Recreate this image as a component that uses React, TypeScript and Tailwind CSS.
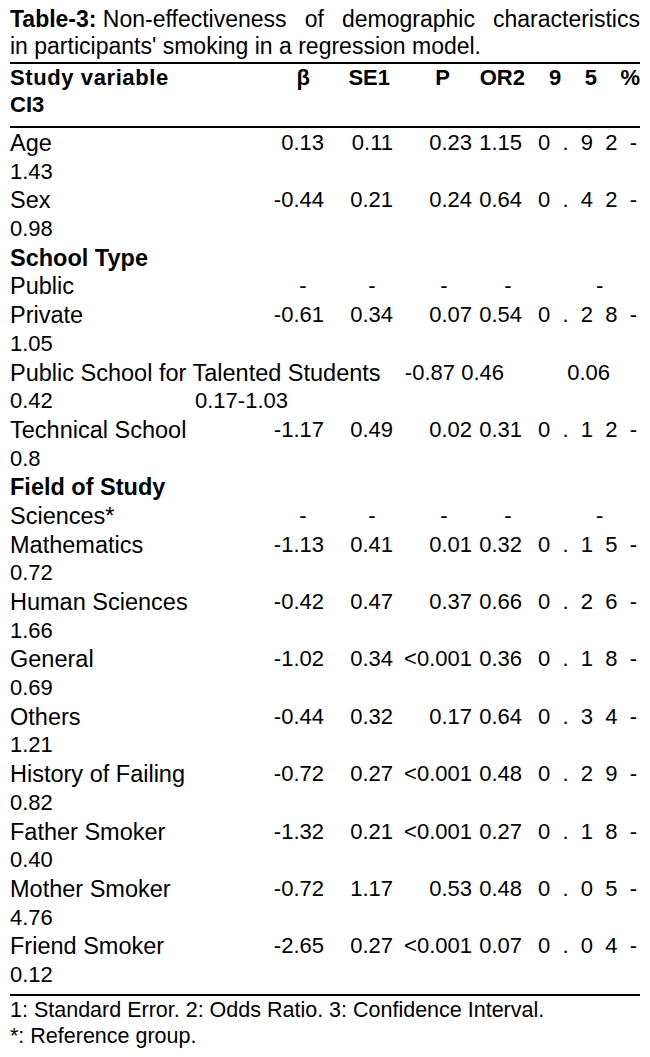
import React from "react";

type Line =
  | { kind: "data"; label: string; vals: string[]; ci: string[]; cont: string }
  | { kind: "group"; label: string }
  | { kind: "ref"; label: string }
  | { kind: "talented" };

const rows: Line[] = [
  { kind: "data", label: "Age", vals: ["0.13", "0.11", "0.23", "1.15"], ci: ["0", ".", "9", "2", "-"], cont: "1.43" },
  { kind: "data", label: "Sex", vals: ["-0.44", "0.21", "0.24", "0.64"], ci: ["0", ".", "4", "2", "-"], cont: "0.98" },
  { kind: "group", label: "School Type" },
  { kind: "ref", label: "Public" },
  { kind: "data", label: "Private", vals: ["-0.61", "0.34", "0.07", "0.54"], ci: ["0", ".", "2", "8", "-"], cont: "1.05" },
  { kind: "talented" },
  { kind: "data", label: "Technical School", vals: ["-1.17", "0.49", "0.02", "0.31"], ci: ["0", ".", "1", "2", "-"], cont: "0.8" },
  { kind: "group", label: "Field of Study" },
  { kind: "ref", label: "Sciences*" },
  { kind: "data", label: "Mathematics", vals: ["-1.13", "0.41", "0.01", "0.32"], ci: ["0", ".", "1", "5", "-"], cont: "0.72" },
  { kind: "data", label: "Human Sciences", vals: ["-0.42", "0.47", "0.37", "0.66"], ci: ["0", ".", "2", "6", "-"], cont: "1.66" },
  { kind: "data", label: "General", vals: ["-1.02", "0.34", "<0.001", "0.36"], ci: ["0", ".", "1", "8", "-"], cont: "0.69" },
  { kind: "data", label: "Others", vals: ["-0.44", "0.32", "0.17", "0.64"], ci: ["0", ".", "3", "4", "-"], cont: "1.21" },
  { kind: "data", label: "History of Failing", vals: ["-0.72", "0.27", "<0.001", "0.48"], ci: ["0", ".", "2", "9", "-"], cont: "0.82" },
  { kind: "data", label: "Father Smoker", vals: ["-1.32", "0.21", "<0.001", "0.27"], ci: ["0", ".", "1", "8", "-"], cont: "0.40" },
  { kind: "data", label: "Mother Smoker", vals: ["-0.72", "1.17", "0.53", "0.48"], ci: ["0", ".", "0", "5", "-"], cont: "4.76" },
  { kind: "data", label: "Friend Smoker", vals: ["-2.65", "0.27", "<0.001", "0.07"], ci: ["0", ".", "0", "4", "-"], cont: "0.12" },
];

function DataLine({ row }: { row: Extract<Line, { kind: "data" }> }) {
  return (
    <>
      <div className="grid h-[28.7px] grid-cols-[258px_56px_69px_79px_50px_1fr]">
        <span>{row.label}</span>
        {row.vals.map((v, i) => (
          <span key={i} className="whitespace-nowrap text-right text-[22px]">
            {v}
          </span>
        ))}
        <span className="flex justify-between pl-[16px] pr-[3px] text-[22px]">
          {row.ci.map((c, i) => (
            <span key={i}>{c}</span>
          ))}
        </span>
      </div>
      <div className="h-[28.7px] text-[22px]">{row.cont}</div>
    </>
  );
}

function RefLine({ label }: { label: string }) {
  return (
    <div className="grid h-[28.7px] grid-cols-[258px_70px_68px_76px_52px_1fr]">
      <span>{label}</span>
      <span className="text-center text-[22px]">-</span>
      <span className="text-center text-[22px]">-</span>
      <span className="text-center text-[22px]">-</span>
      <span className="text-center text-[22px]">-</span>
      <span className="pl-[62px] text-[22px]">-</span>
    </div>
  );
}

export default function App() {
  return (
    <div className="min-h-[1057px] w-[650px] bg-white px-[10px] pt-[6px] font-['Liberation_Sans',Arial,sans-serif] text-black">
      <div className="text-[23px] leading-[27px]">
        <div className="flex justify-between">
          <span>
            <b>Table-3:</b> Non-effectiveness
          </span>
          <span>of</span>
          <span>demographic</span>
          <span>characteristics</span>
        </div>
        <div>in participants' smoking in a regression model.</div>
      </div>

      <div className="mt-[2px] border-t-2 border-black" />
      <div className="text-[22px] font-bold leading-[27px]">
        <div className="grid grid-cols-[258px_42px_80px_60px_75px_1fr]">
          <span className="tracking-[0.6px]">Study variable</span>
          <span className="text-right">β</span>
          <span className="text-right">SE1</span>
          <span className="text-right">P</span>
          <span className="text-right">OR2</span>
          <span className="flex justify-between pl-[24px]">
            <span>9</span>
            <span>5</span>
            <span>%</span>
          </span>
        </div>
        <div>CI3</div>
      </div>
      <div className="mt-[8px] border-t-2 border-black" />

      <div className="pt-[1px] text-[23.5px] leading-[28.7px]">
        {rows.map((row, i) => {
          if (row.kind === "group") {
            return (
              <div key={i} className="h-[28.7px] font-bold">
                {row.label}
              </div>
            );
          }
          if (row.kind === "ref") return <RefLine key={i} label={row.label} />;
          if (row.kind === "talented") {
            return (
              <React.Fragment key={i}>
                <div className="grid h-[28.7px] grid-cols-[380px_65px_49px_106px]">
                  <span className="whitespace-nowrap">Public School for Talented Students</span>
                  <span className="text-right text-[22px]">-0.87</span>
                  <span className="text-right text-[22px]">0.46</span>
                  <span className="text-right text-[22px]">0.06</span>
                </div>
                <div className="grid h-[28.7px] grid-cols-[185px_1fr] text-[22px]">
                  <span>0.42</span>
                  <span>0.17-1.03</span>
                </div>
              </React.Fragment>
            );
          }
          return <DataLine key={i} row={row} />;
        })}
      </div>

      <div className="mt-[4px] border-t-2 border-black" />
      <div className="pt-[1px] text-[21.5px] leading-[26px]">
        <div>1: Standard Error. 2: Odds Ratio. 3: Confidence Interval.</div>
        <div>*: Reference group.</div>
      </div>
    </div>
  );
}
